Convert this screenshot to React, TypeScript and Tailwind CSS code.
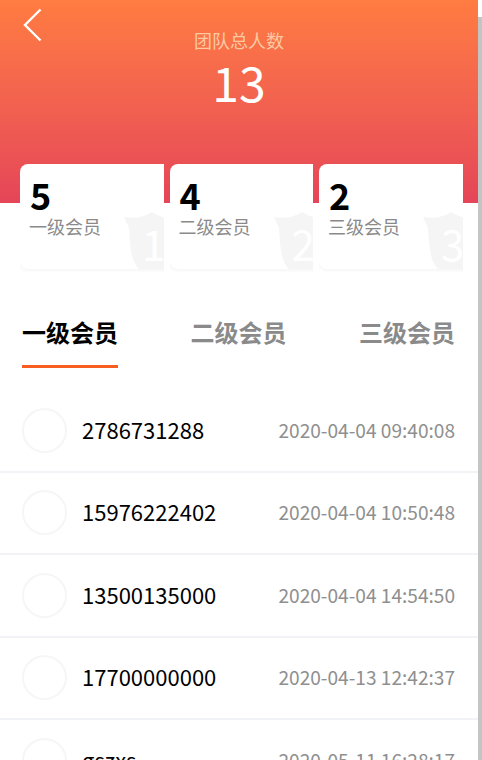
const font = {
  fontFamily: '"Noto Sans CJK SC", "Noto Sans", sans-serif',
};

const levels = [
  { count: "5", label: "一级会员", rank: "1" },
  { count: "4", label: "二级会员", rank: "2" },
  { count: "2", label: "三级会员", rank: "3" },
];

const members = [
  { name: "2786731288", time: "2020-04-04 09:40:08" },
  { name: "15976222402", time: "2020-04-04 10:50:48" },
  { name: "13500135000", time: "2020-04-04 14:54:50" },
  { name: "17700000000", time: "2020-04-13 12:42:37" },
  { name: "gszxs", time: "2020-05-11 16:28:17" },
];

const LevelCard = ({ count, label, rank }: (typeof levels)[number]) => (
  <div className="h-[110px] w-[143.5px] shrink-0 overflow-hidden">
    <div className="relative h-[105px] w-[160px] overflow-hidden rounded-[8px] bg-white pl-[10px] pt-[10px] shadow-[0_1px_4px_rgba(0,0,0,0.06)]">
      <div className="text-[36px] font-bold leading-[41px] text-black">{count}</div>
      <div className="-ml-px text-[18px] leading-[22px] text-[#8a8a8a]">{label}</div>
      {/* shield watermark */}
      <svg className="absolute left-[104px] top-[48px]" width="56" height="58" viewBox="0 0 56 58">
        <path d="M0 5 C 12 7 20 5 28 0 C 36 5 46 8 56 8 L 56 58 L 16 58 C 6 50 6 30 5 16 Z" fill="#f5f5f5" />
      </svg>
      <div className="absolute left-[122px] top-[56px] text-[42px] leading-[46px] text-white">{rank}</div>
    </div>
  </div>
);

export default function App() {
  return (
    <div className="flex h-[760px] w-[482px] overflow-hidden bg-white" style={font}>
      <div className="w-[478px] shrink-0">
        {/* header */}
        <div className="relative h-[203px] bg-gradient-to-b from-[#ff7c41] to-[#e54558] pt-[27px] text-center">
          <svg className="absolute left-[22px] top-[8px]" width="20" height="34" viewBox="0 0 20 34" fill="none">
            <path d="M18.5 1.5 L3 17 L18.5 32.5" stroke="#fff" strokeWidth="2.4" />
          </svg>
          <div className="text-[18px] leading-[27px] text-[#fdc9a2]">团队总人数</div>
          <div className="text-[48px] leading-[54px] text-white">13</div>
        </div>

        {/* level cards */}
        <div className="-mt-[39px] flex gap-[6px] pl-[20px]">
          {levels.map((l) => (
            <LevelCard key={l.rank} {...l} />
          ))}
        </div>

        {/* tabs */}
        <div className="mt-[38px] flex items-start justify-between pl-[22px] pr-[23px] text-[24px] font-bold leading-[40px] text-[#8a8a8a]">
          <div className="w-[96px] border-b-[3px] border-[#f85d22] pb-[13px] text-black">一级会员</div>
          <div>二级会员</div>
          <div>三级会员</div>
        </div>

        {/* member list */}
        <div className="mt-[22px]">
          {members.map((m) => (
            <div key={m.time} className="flex h-[82.5px] items-center border-b-2 border-[#f1f3f6] pl-[22px] pr-[23px]">
              <div className="h-[45px] w-[45px] rounded-full border-2 border-[#f6f6f6]" />
              <div className="ml-[15px] flex-1 pb-[2px] text-[22px] text-black">{m.name}</div>
              <div className="text-[19.1px] text-[#8f8f8f]">{m.time}</div>
            </div>
          ))}
        </div>
      </div>
      {/* scrollbar */}
      <div className="mt-[17px] w-[4px] bg-[#c4c4c4]" />
    </div>
  );
}
